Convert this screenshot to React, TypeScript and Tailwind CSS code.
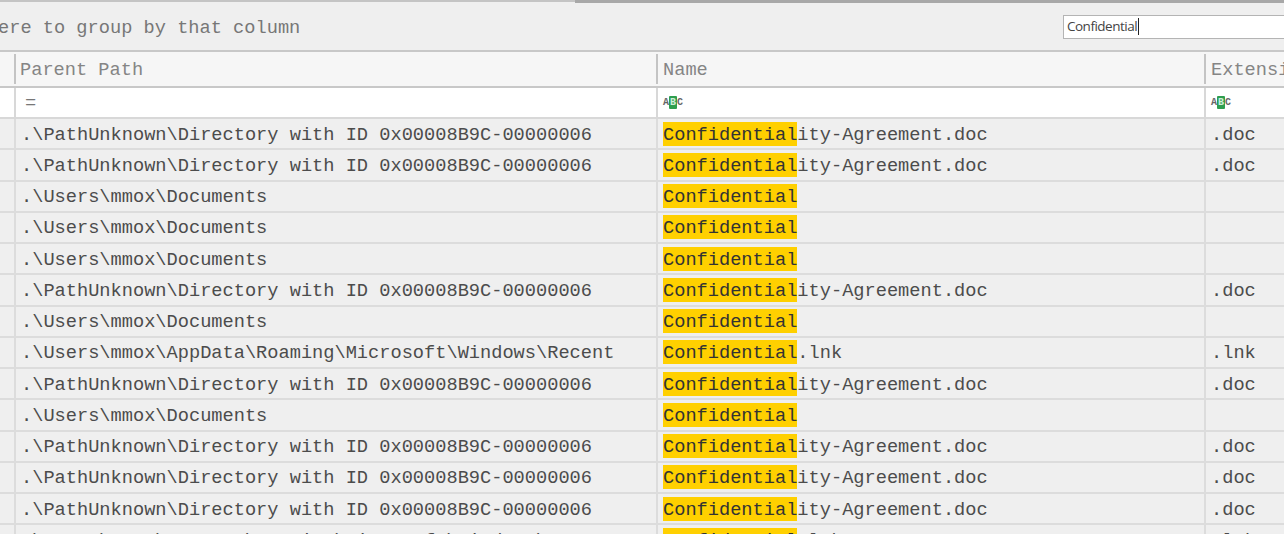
const PATH_ID = ".\\PathUnknown\\Directory with ID 0x00008B9C-00000006";
const PATH_DOCS = ".\\Users\\mmox\\Documents";
const PATH_RECENT = ".\\Users\\mmox\\AppData\\Roaming\\Microsoft\\Windows\\Recent";

const rows = [
  { path: PATH_ID, rest: "ity-Agreement.doc", ext: ".doc" },
  { path: PATH_ID, rest: "ity-Agreement.doc", ext: ".doc" },
  { path: PATH_DOCS, rest: "", ext: "" },
  { path: PATH_DOCS, rest: "", ext: "" },
  { path: PATH_DOCS, rest: "", ext: "" },
  { path: PATH_ID, rest: "ity-Agreement.doc", ext: ".doc" },
  { path: PATH_DOCS, rest: "", ext: "" },
  { path: PATH_RECENT, rest: ".lnk", ext: ".lnk" },
  { path: PATH_ID, rest: "ity-Agreement.doc", ext: ".doc" },
  { path: PATH_DOCS, rest: "", ext: "" },
  { path: PATH_ID, rest: "ity-Agreement.doc", ext: ".doc" },
  { path: PATH_ID, rest: "ity-Agreement.doc", ext: ".doc" },
  { path: PATH_ID, rest: "ity-Agreement.doc", ext: ".doc" },
  { path: PATH_RECENT, rest: ".lnk", ext: ".lnk" },
];

function AbcIcon() {
  return (
    <div className="flex items-center font-['Liberation_Mono',monospace] text-[10px] font-bold leading-none text-[#666]">
      <span className="w-[6px] text-center">A</span>
      <span className="h-[13px] w-[8px] rounded-[1px] bg-[#2e9e4f] text-center leading-[13px] text-[#cfeeda]">B</span>
      <span className="w-[6px] text-center">C</span>
    </div>
  );
}

export default function App() {
  return (
    <div className="h-[534px] w-[1284px] overflow-hidden bg-[#efefef] font-['Liberation_Mono',monospace] text-[18.67px] text-[#4c4c4c]">
      <div className="flex h-[3px] border-t-2 border-[#c4c4c4]">
        <div className="w-[575px]" />
        <div className="-mt-[2px] h-[3px] flex-1 bg-[#a8a8a8]" />
      </div>

      <div className="flex h-[49px] items-center justify-between border-b-2 border-[#c8c8c8]">
        <div className="-ml-[2px] pt-[3px] text-[#777]">ere to group by that column</div>
        <div className="-mr-[10px] flex h-[24px] w-[231px] shrink-0 items-center border border-[#b4b4b4] bg-white pl-[3px] font-['Open_Sans',sans-serif] text-[13.5px] tracking-[-0.5px] text-[#444]">
          Confidential
          <span className="ml-[1px] h-[17px] w-px bg-[#222]" />
        </div>
      </div>

      <div className="flex h-[36px] border-b-2 border-[#c8c8c8] bg-[#f6f6f6] text-[#858585]">
        <div className="w-[14px] shrink-0" />
        <div className="my-[2px] flex w-[642px] shrink-0 items-center border-l-2 border-[#c4c4c4] pl-[4px] pt-[2px]">Parent Path</div>
        <div className="my-[2px] flex w-[548px] shrink-0 items-center border-l-2 border-[#c4c4c4] pl-[5px] pt-[2px]">Name</div>
        <div className="my-[2px] flex w-[80px] shrink-0 items-center overflow-hidden whitespace-pre border-l-2 border-[#c4c4c4] pl-[5px] pt-[2px]">Extension</div>
      </div>

      <div className="flex h-[31px] border-b-2 border-[#d8d8d8] bg-white">
        <div className="w-[14px] shrink-0" />
        <div className="flex w-[642px] shrink-0 items-center border-l-2 border-[#d8d8d8] pl-[9px] text-[#777]">=</div>
        <div className="flex w-[548px] shrink-0 items-center border-l-2 border-[#d8d8d8] pl-[5px]">
          <AbcIcon />
        </div>
        <div className="flex w-[80px] shrink-0 items-center border-l-2 border-[#d8d8d8] pl-[5px]">
          <AbcIcon />
        </div>
      </div>

      {rows.map((row, i) => (
        <div key={i} className="flex h-[31.25px] border-b-2 border-[#dcdcdc]">
          <div className="w-[14px] shrink-0" />
          <div className="flex w-[642px] shrink-0 items-center whitespace-pre border-l-2 border-[#dcdcdc] pl-[5px] pt-[2px]">{row.path}</div>
          <div className="flex w-[548px] shrink-0 items-center whitespace-pre border-l-2 border-[#dcdcdc] pl-[5px]">
            <span className="bg-[#ffd000] pt-[2px] leading-[22px] text-[#333]">Confidential</span>
            <span className="pt-[2px] leading-[22px]">{row.rest}</span>
          </div>
          <div className="flex w-[80px] shrink-0 items-center whitespace-pre border-l-2 border-[#dcdcdc] pl-[5px] pt-[2px]">{row.ext}</div>
        </div>
      ))}
    </div>
  );
}
